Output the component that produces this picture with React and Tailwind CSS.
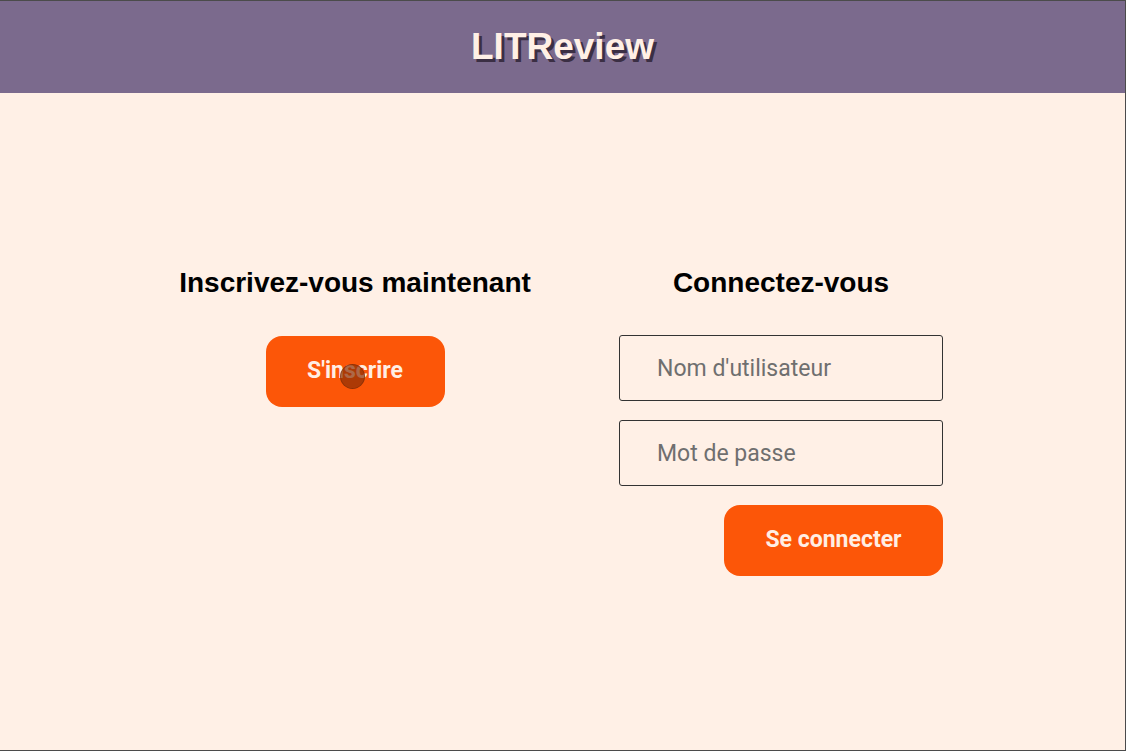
const Field = ({ placeholder, type = "text" }) => (
  <input
    type={type}
    placeholder={placeholder}
    className="h-[66px] w-full rounded-[3px] border border-[#333333] bg-transparent pl-[37px] text-[23px] text-[#333] placeholder:text-[#6f6f6f] outline-none"
    style={{ fontFamily: "Roboto, 'Liberation Sans', sans-serif" }}
  />
);

const App = () => {
  return (
    <div className="flex h-[751px] w-[1126px] flex-col border-y border-r border-[#4b4b4b] bg-[#fff0e6]">
      <header className="flex h-[92px] shrink-0 items-center justify-center bg-[#7b6a8d]">
        <h1
          className="text-[37px] font-bold text-[#fff0e6] [text-shadow:3px_3px_0_#3b2f44]"
          style={{ fontFamily: "'Liberation Sans', Arial, sans-serif" }}
        >
          LITReview
        </h1>
      </header>

      <main
        className="flex flex-1 items-center justify-center"
        style={{ fontFamily: "'Liberation Sans', Arial, sans-serif" }}
      >
        <div className="flex items-start gap-[91px]">
          <section className="flex w-[346px] flex-col items-center">
            <h2 className="whitespace-nowrap text-[28px] font-bold leading-[32px] text-black">Inscrivez-vous maintenant</h2>
            <div className="relative mt-[37px]">
              <button
                className="h-[71px] w-[179px] rounded-[16px] bg-[#fc5608] text-[23px] font-bold text-[#ffeee4]"
                style={{ fontFamily: "Roboto, 'Liberation Sans', sans-serif" }}
              >
                S'inscrire
              </button>
              <span className="absolute left-[74px] top-[28px] h-[25px] w-[25px] rounded-full border border-[#7a2a06]/60 bg-[#8a2f05]/70" />
            </div>
          </section>

          <section className="flex w-[324px] flex-col items-center">
            <h2 className="whitespace-nowrap text-[28px] font-bold leading-[32px] text-black">Connectez-vous</h2>
            <form className="mt-[36px] flex w-full flex-col items-end gap-[19px]">
              <Field placeholder="Nom d'utilisateur" />
              <Field placeholder="Mot de passe" type="password" />
              <button
                type="button"
                className="h-[71px] w-[219px] rounded-[16px] bg-[#fc5608] text-[23px] font-bold text-[#ffeee4]"
                style={{ fontFamily: "Roboto, 'Liberation Sans', sans-serif" }}
              >
                Se connecter
              </button>
            </form>
          </section>
        </div>
      </main>
    </div>
  );
};

export default App;
